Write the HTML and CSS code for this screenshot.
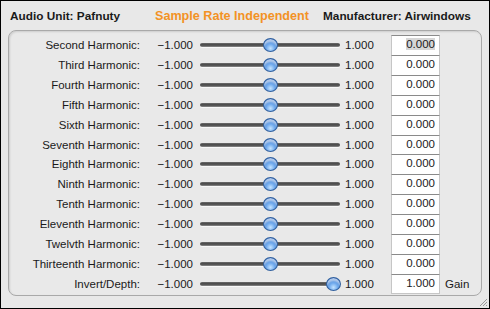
FILE: index.html
```html
<!DOCTYPE html>
<html lang="en">
<head>
    <meta charset="UTF-8">
    <title>Pafnuty</title>
    <link rel="stylesheet" href="styles.css">
</head>
<body>
    <div class="window">
        <div class="header">
            <span class="unit-name">Audio Unit: Pafnuty</span>
            <span class="rate">Sample Rate Independent</span>
            <span class="maker">Manufacturer: Airwindows</span>
        </div>

        <div class="panel">
            <div class="param">
                <span class="label">Second Harmonic:</span>
                <span class="min">−1.000</span>
                <div class="slider"><div class="track"></div><div class="knob" style="left: 50%"></div></div>
                <span class="max">1.000</span>
                <span class="field"><span class="selected">0.000</span></span>
                <span class="unit"></span>
            </div>
            <div class="param">
                <span class="label">Third Harmonic:</span>
                <span class="min">−1.000</span>
                <div class="slider"><div class="track"></div><div class="knob" style="left: 50%"></div></div>
                <span class="max">1.000</span>
                <span class="field">0.000</span>
                <span class="unit"></span>
            </div>
            <div class="param">
                <span class="label">Fourth Harmonic:</span>
                <span class="min">−1.000</span>
                <div class="slider"><div class="track"></div><div class="knob" style="left: 50%"></div></div>
                <span class="max">1.000</span>
                <span class="field">0.000</span>
                <span class="unit"></span>
            </div>
            <div class="param">
                <span class="label">Fifth Harmonic:</span>
                <span class="min">−1.000</span>
                <div class="slider"><div class="track"></div><div class="knob" style="left: 50%"></div></div>
                <span class="max">1.000</span>
                <span class="field">0.000</span>
                <span class="unit"></span>
            </div>
            <div class="param">
                <span class="label">Sixth Harmonic:</span>
                <span class="min">−1.000</span>
                <div class="slider"><div class="track"></div><div class="knob" style="left: 50%"></div></div>
                <span class="max">1.000</span>
                <span class="field">0.000</span>
                <span class="unit"></span>
            </div>
            <div class="param">
                <span class="label">Seventh Harmonic:</span>
                <span class="min">−1.000</span>
                <div class="slider"><div class="track"></div><div class="knob" style="left: 50%"></div></div>
                <span class="max">1.000</span>
                <span class="field">0.000</span>
                <span class="unit"></span>
            </div>
            <div class="param">
                <span class="label">Eighth Harmonic:</span>
                <span class="min">−1.000</span>
                <div class="slider"><div class="track"></div><div class="knob" style="left: 50%"></div></div>
                <span class="max">1.000</span>
                <span class="field">0.000</span>
                <span class="unit"></span>
            </div>
            <div class="param">
                <span class="label">Ninth Harmonic:</span>
                <span class="min">−1.000</span>
                <div class="slider"><div class="track"></div><div class="knob" style="left: 50%"></div></div>
                <span class="max">1.000</span>
                <span class="field">0.000</span>
                <span class="unit"></span>
            </div>
            <div class="param">
                <span class="label">Tenth Harmonic:</span>
                <span class="min">−1.000</span>
                <div class="slider"><div class="track"></div><div class="knob" style="left: 50%"></div></div>
                <span class="max">1.000</span>
                <span class="field">0.000</span>
                <span class="unit"></span>
            </div>
            <div class="param">
                <span class="label">Eleventh Harmonic:</span>
                <span class="min">−1.000</span>
                <div class="slider"><div class="track"></div><div class="knob" style="left: 50%"></div></div>
                <span class="max">1.000</span>
                <span class="field">0.000</span>
                <span class="unit"></span>
            </div>
            <div class="param">
                <span class="label">Twelvth Harmonic:</span>
                <span class="min">−1.000</span>
                <div class="slider"><div class="track"></div><div class="knob" style="left: 50%"></div></div>
                <span class="max">1.000</span>
                <span class="field">0.000</span>
                <span class="unit"></span>
            </div>
            <div class="param">
                <span class="label">Thirteenth Harmonic:</span>
                <span class="min">−1.000</span>
                <div class="slider"><div class="track"></div><div class="knob" style="left: 50%"></div></div>
                <span class="max">1.000</span>
                <span class="field">0.000</span>
                <span class="unit"></span>
            </div>
            <div class="param last">
                <span class="label">Invert/Depth:</span>
                <span class="min">−1.000</span>
                <div class="slider"><div class="track"></div><div class="knob end" style="left: 100%"></div></div>
                <span class="max">1.000</span>
                <span class="field">1.000</span>
                <span class="unit">Gain</span>
            </div>
        </div>

        <svg class="grip" width="9" height="9" viewBox="0 0 9 9">
            <path d="M8 1 L1 8 M8 4 L4 8 M8 7 L7 8" stroke="#9a9a9a" stroke-width="1" fill="none"/>
        </svg>
    </div>
</body>
</html>
```

FILE: styles.css
```css
* {
    box-sizing: border-box;
    margin: 0;
    padding: 0;
}

body {
    width: 490px;
    height: 309px;
    font-family: 'Liberation Sans', Arial, sans-serif;
    font-size: 11.5px;
    color: #1a1a1a;
    background: #e8e8e8;
}

.window {
    position: relative;
    width: 490px;
    height: 309px;
    border: 1px solid #000;
    background: #e8e8e8;
}

/* top line */
.header {
    display: grid;
    grid-template-columns: 145px 168px auto;
    align-items: center;
    height: 29px;
    padding: 1px 0 0 9px;
    font-weight: bold;
    font-size: 11.8px;
}

.rate {
    color: #f39224;
    font-size: 12.6px;
}

/* parameter box */
.panel {
    margin: 0 7px 0 7px;
    height: 266px;
    padding: 4px 0 0 0;
    border: 1px solid #a9a9a9;
    border-radius: 8px;
    background: #e9e9e9;
    box-shadow: inset 1px 1px 2px rgba(0, 0, 0, 0.12);
}

.param {
    display: grid;
    grid-template-columns: 131px 56px 148px 47px 49px auto;
    align-items: center;
    height: 19.92px;
}

.label {
    text-align: right;
}

.min {
    text-align: right;
    padding-right: 3px;
}

.max {
    padding-left: 1px;
}

.slider {
    position: relative;
    height: 14px;
    margin: 0 4px;
}

.track {
    position: absolute;
    left: 0;
    right: 0;
    top: 5px;
    height: 4px;
    border-radius: 2px;
    background: linear-gradient(#6e6e6e, #444 50%, #8e8e8e);
    box-shadow: 0 1px 0 rgba(255, 255, 255, 0.7);
}

.knob {
    position: absolute;
    top: 0;
    width: 15px;
    height: 14px;
    margin-left: -7.5px;
    border-radius: 50%;
    border: 1px solid #2f5f9e;
    background: radial-gradient(circle at 50% 78%, #c4e3ff 0%, #6aa6ec 40%, #2d66bb 85%);
    box-shadow: inset 0 3px 2px rgba(255, 255, 255, 0.6);
}

.knob.end {
    margin-left: -14px;
}

.field {
    height: 20px;
    padding: 2px 4px 0 0;
    text-align: right;
    background: #fff;
    border: 1px solid #c6c6c6;
    border-top: 1px solid #8a8a8a;
    border-bottom: none;
}

.last .field {
    border-bottom: 1px solid #c6c6c6;
}

.selected {
    background: #d6d6d6;
}

.unit {
    padding-left: 5px;
}

.grip {
    position: absolute;
    right: 1px;
    bottom: 1px;
}
```
